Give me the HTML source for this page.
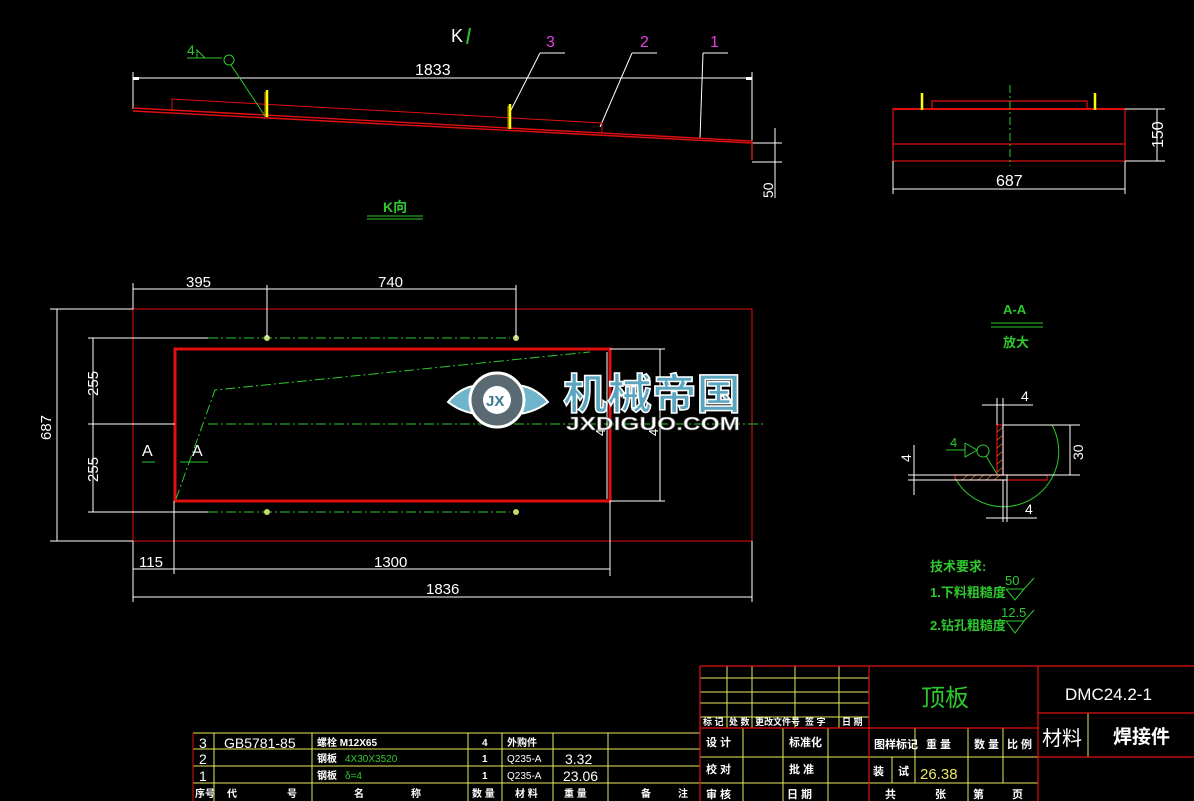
<!DOCTYPE html>
<html><head><meta charset="utf-8"><style>
html,body{margin:0;padding:0;background:#000;}
svg{display:block}
text{font-family:"Liberation Sans","Noto Sans CJK SC",sans-serif;}
</style></head><body>
<svg width="1194" height="801" viewBox="0 0 1194 801" xmlns="http://www.w3.org/2000/svg">
<rect width="1194" height="801" fill="#000"/>
<!-- TOP VIEW -->
<g stroke="#fff" stroke-width="1" fill="none">
<line x1="133" y1="78" x2="752" y2="78"/>
<line x1="133" y1="72" x2="133" y2="109"/>
<line x1="752" y1="72" x2="752" y2="141"/>
<line x1="752" y1="143" x2="782" y2="143"/>
<line x1="752" y1="162" x2="782" y2="162"/>
<line x1="775" y1="128" x2="775" y2="198"/>
<line x1="540" y1="53" x2="565" y2="53"/><line x1="540" y1="53" x2="510" y2="112"/>
<line x1="632" y1="53" x2="657" y2="53"/><line x1="632" y1="53" x2="600" y2="127"/>
<line x1="703" y1="53" x2="728" y2="53"/><line x1="703" y1="53" x2="700" y2="138"/>
</g>
<g fill="#fff"><rect x="133" y="77" width="6" height="3"/><rect x="746" y="77" width="6" height="3"/></g>
<g stroke="#e01010" fill="none" stroke-width="1.4">
<polyline points="133,108 752,141 752,160"/>
<line x1="133" y1="111" x2="752" y2="143"/>
<polyline points="172,110 172,99 602,123 602,133" stroke-width="1"/>
</g>
<g stroke="#ff0" stroke-width="2.5"><line x1="267" y1="90" x2="267" y2="117"/><line x1="510" y1="104" x2="510" y2="129"/></g>
<g stroke="#e08000" stroke-width="1"><line x1="265" y1="92" x2="265" y2="117"/><line x1="508" y1="106" x2="508" y2="129"/></g>
<g stroke="#2ec82e" fill="none" stroke-width="1">
<line x1="187" y1="58" x2="222" y2="58"/><polyline points="197,58 197,50 205,58"/>
<circle cx="229" cy="60" r="5"/><line x1="231" y1="65" x2="265" y2="116"/>
<line x1="367" y1="216" x2="423" y2="216"/><line x1="367" y1="219" x2="423" y2="219"/>
<line x1="467" y1="44" x2="470" y2="28" stroke-width="2"/>
</g>
<text x="187" y="55" fill="#2ec82e" font-size="14">4</text>
<text x="451" y="42" fill="#fff" font-size="18">K</text>
<text x="415" y="75" fill="#fff" font-size="16">1833</text>
<text x="546" y="47" fill="#e040e0" font-size="16">3</text>
<text x="640" y="47" fill="#e040e0" font-size="16">2</text>
<text x="710" y="47" fill="#e040e0" font-size="16">1</text>
<text x="0" y="0" fill="#fff" font-size="14" transform="translate(773,198) rotate(-90)">50</text>
<text x="383" y="212" fill="#2ec82e" font-size="14" font-weight="bold">K向</text>

<!-- SIDE VIEW -->
<g stroke="#e01010" fill="none" stroke-width="1.2">
<rect x="893" y="109" width="232" height="52"/>
<line x1="893" y1="144" x2="1125" y2="144"/>
<polyline points="932,109 932,101 1087,101 1087,109"/>
</g>
<line x1="893" y1="109" x2="1125" y2="109" stroke="#e01010" stroke-width="2"/>
<g stroke="#ff0" stroke-width="2.5"><line x1="922" y1="93" x2="922" y2="110"/><line x1="1095" y1="93" x2="1095" y2="110"/></g>
<line x1="1010" y1="85" x2="1010" y2="166" stroke="#2ec82e" stroke-dasharray="8,3,2,3"/>
<g stroke="#fff" fill="none">
<line x1="1125" y1="109" x2="1165" y2="109"/><line x1="1125" y1="161" x2="1165" y2="161"/>
<line x1="1157" y1="109" x2="1157" y2="161"/>
<line x1="893" y1="161" x2="893" y2="194"/><line x1="1125" y1="161" x2="1125" y2="194"/>
<line x1="893" y1="189" x2="1125" y2="189"/>
</g>
<text x="996" y="186" fill="#fff" font-size="16">687</text>
<text x="0" y="0" fill="#fff" font-size="16" transform="translate(1163,148) rotate(-90)">150</text>

<!-- PLAN VIEW -->
<rect x="133" y="309" width="619" height="232" fill="none" stroke="#e01010" stroke-width="1"/>
<rect x="175" y="349" width="435" height="152" fill="none" stroke="#e01010" stroke-width="3"/>
<g stroke="#2ec82e" fill="none" stroke-dasharray="10,3,2,3">
<line x1="208" y1="338" x2="510" y2="338"/>
<line x1="208" y1="512" x2="510" y2="512"/>
<line x1="208" y1="424" x2="765" y2="424"/>
<polyline points="176,499 215,390 590,352"/>
</g>
<g fill="#c8d870"><circle cx="267" cy="338" r="3"/><circle cx="516" cy="338" r="3"/><circle cx="267" cy="512" r="3"/><circle cx="516" cy="512" r="3"/></g>
<g stroke="#2ec82e"><line x1="142" y1="462" x2="155" y2="462"/><line x1="180" y1="462" x2="208" y2="462"/></g>
<g stroke="#fff" fill="none" stroke-width="1">
<line x1="133" y1="283" x2="133" y2="309"/><line x1="267" y1="285" x2="267" y2="338"/><line x1="516" y1="285" x2="516" y2="338"/>
<line x1="133" y1="289" x2="516" y2="289"/>
<line x1="50" y1="309" x2="133" y2="309"/><line x1="50" y1="541" x2="133" y2="541"/>
<line x1="57" y1="309" x2="57" y2="541"/>
<line x1="88" y1="338" x2="208" y2="338"/><line x1="88" y1="512" x2="208" y2="512"/>
<line x1="93" y1="338" x2="93" y2="512"/><line x1="88" y1="424" x2="175" y2="424"/>
<line x1="610" y1="349" x2="665" y2="349"/><line x1="610" y1="501" x2="665" y2="501"/>
<line x1="660" y1="349" x2="660" y2="501"/><line x1="607" y1="352" x2="607" y2="499"/>
<line x1="133" y1="541" x2="133" y2="602"/><line x1="174" y1="501" x2="174" y2="574"/>
<line x1="610" y1="501" x2="610" y2="576"/><line x1="752" y1="541" x2="752" y2="602"/>
<line x1="133" y1="569" x2="610" y2="569"/>
<line x1="133" y1="597" x2="752" y2="597"/>
</g>
<g fill="#fff" font-size="15">
<text x="186" y="287">395</text><text x="378" y="287">740</text>
<text x="139" y="567">115</text><text x="374" y="567">1300</text><text x="426" y="594">1836</text>
<text x="142" y="456" font-size="16">A</text><text x="192" y="456" font-size="16">A</text>
<text transform="translate(51,440) rotate(-90)">687</text>
<text transform="translate(98,396) rotate(-90)">255</text>
<text transform="translate(98,482) rotate(-90)">255</text>
<text transform="translate(605,436) rotate(-90)" font-size="13">4</text>
<text transform="translate(658,436) rotate(-90)" font-size="13">4</text>
</g>
<!-- watermark -->
<g>
<path d="M448,402 Q468,378 500,388 L500,414 Q468,418 448,402Z" fill="#6fb6cc" stroke="#fff" stroke-width="2"/>
<path d="M548,402 Q528,378 496,388 L496,414 Q528,418 548,402Z" fill="#6fb6cc" stroke="#fff" stroke-width="2"/>
<circle cx="497" cy="400" r="27" fill="#5a6a72" stroke="#fff" stroke-width="3"/>
<circle cx="497" cy="400" r="14" fill="#fff"/>
<text x="486" y="406" font-size="15" font-weight="bold" fill="#3a7a90">JX</text>
<text x="563" y="409" font-size="42" font-weight="bold" fill="#5aa6c0" stroke="#fff" stroke-width="1.5" textLength="178" lengthAdjust="spacingAndGlyphs">机械帝国</text>
<text x="566" y="430" font-size="18" font-weight="bold" fill="#fff" stroke="#555" stroke-width="0.6" textLength="174" lengthAdjust="spacingAndGlyphs">JXDIGUO.COM</text>
</g>

<!-- A-A section -->
<text x="1003" y="314" fill="#2ec82e" font-size="13" font-weight="bold">A-A</text>
<g stroke="#2ec82e"><line x1="991" y1="323" x2="1043" y2="323"/><line x1="991" y1="327" x2="1043" y2="327"/></g>
<text x="1003" y="347" fill="#2ec82e" font-size="13" font-weight="bold">放大</text>
<path d="M1052,425 A54,54 0 0 1 955,478" fill="none" stroke="#2ec82e"/>
<g stroke="#e01010" fill="none" stroke-width="1.2">
<rect x="997" y="425" width="6" height="50"/><rect x="955" y="475" width="92" height="5"/>
</g>
<g stroke="#d07020" stroke-width="0.8">
<path d="M997,432 l6,-5 M997,440 l6,-5 M997,448 l6,-5 M997,456 l6,-5 M997,464 l6,-5 M997,472 l6,-5"/>
<path d="M962,480 l6,-5 M970,480 l6,-5 M978,480 l6,-5 M986,480 l6,-5 M994,480 l6,-5"/>
</g>
<g stroke="#fff" fill="none">
<line x1="1003" y1="425" x2="1080" y2="425"/><line x1="908" y1="475" x2="1080" y2="475"/><line x1="908" y1="480" x2="1007" y2="480"/>
<line x1="997" y1="398" x2="997" y2="425"/><line x1="1003" y1="398" x2="1003" y2="475"/><line x1="982" y1="405" x2="1033" y2="405"/>
<line x1="914" y1="445" x2="914" y2="495"/>
<line x1="1003" y1="480" x2="1003" y2="522"/><line x1="1007" y1="475" x2="1007" y2="522"/><line x1="986" y1="518" x2="1037" y2="518"/>
<line x1="1070" y1="425" x2="1070" y2="475"/>
</g>
<g fill="#fff" font-size="14">
<text x="1021" y="401">4</text><text x="1025" y="514">4</text>
<text transform="translate(911,462) rotate(-90)">4</text>
<text transform="translate(1083,460) rotate(-90)">30</text>
</g>
<g stroke="#2ec82e" fill="none">
<line x1="946" y1="450" x2="965" y2="450"/><polyline points="965,443 965,457 977,450 965,443"/>
<circle cx="983" cy="451" r="6"/><line x1="986" y1="456" x2="997" y2="474"/>
</g>
<text x="950" y="447" fill="#2ec82e" font-size="13">4</text>
<!-- tech req -->
<g fill="#2ec82e" font-size="13" font-weight="bold">
<text x="930" y="571">技术要求:</text>
<text x="930" y="597">1.下料粗糙度</text>
<text x="930" y="630">2.钻孔粗糙度</text>
<text x="1005" y="585" font-weight="normal" font-size="13">50</text>
<text x="1001" y="617" font-weight="normal" font-size="13">12.5</text>
</g>
<g stroke="#2ec82e" fill="none">
<polyline points="1006,589 1015,600 1024,589 1006,589"/><line x1="1024" y1="589" x2="1034" y2="578"/>
<polyline points="1006,621 1015,633 1024,621 1006,621"/><line x1="1024" y1="621" x2="1034" y2="610"/>
</g>

<!-- PARTS LIST -->
<g stroke="#e8e860" fill="none" stroke-width="1">
<line x1="193" y1="733" x2="700" y2="733"/><line x1="193" y1="749" x2="700" y2="749"/>
<line x1="193" y1="766" x2="700" y2="766"/><line x1="193" y1="783" x2="700" y2="783"/>
<line x1="214" y1="733" x2="214" y2="801"/><line x1="312" y1="733" x2="312" y2="801"/>
<line x1="468" y1="733" x2="468" y2="801"/><line x1="502" y1="733" x2="502" y2="801"/>
<line x1="553" y1="733" x2="553" y2="801"/><line x1="608" y1="733" x2="608" y2="801"/>
</g>
<line x1="193" y1="733" x2="193" y2="801" stroke="#e01010"/>
<g fill="#fff" font-size="14">
<text x="199" y="748">3</text><text x="199" y="764">2</text><text x="199" y="781">1</text>
<text x="224" y="748">GB5781-85</text>
<text x="565" y="764">3.32</text><text x="563" y="781">23.06</text>
</g>
<g fill="#fff" font-size="10" font-weight="bold">
<text x="317" y="746">螺栓 M12X65</text><text x="317" y="762">钢板</text><text x="317" y="779">钢板</text>
<text x="482" y="746">4</text><text x="482" y="762">1</text><text x="482" y="779">1</text>
<text x="507" y="746">外购件</text><text x="507" y="762" font-weight="normal">Q235-A</text><text x="507" y="779" font-weight="normal">Q235-A</text>
<text x="195" y="797">序号</text><text x="227" y="797">代</text><text x="287" y="797">号</text>
<text x="354" y="797">名</text><text x="411" y="797">称</text>
<text x="472" y="797">数 量</text><text x="515" y="797">材 料</text><text x="564" y="797">重 量</text>
<text x="641" y="797">备</text><text x="678" y="797">注</text>
</g>
<text x="345" y="762" fill="#2ec82e" font-size="10">4X30X3520</text>
<text x="345" y="779" fill="#2ec82e" font-size="10">δ=4</text>

<!-- TITLE BLOCK -->
<g stroke="#e8e860" fill="none">
<line x1="700" y1="678" x2="869" y2="678"/><line x1="700" y1="692" x2="869" y2="692"/>
<line x1="700" y1="703" x2="869" y2="703"/><line x1="700" y1="717" x2="869" y2="717"/>
<line x1="727" y1="666" x2="727" y2="728"/><line x1="752" y1="666" x2="752" y2="728"/>
<line x1="795" y1="666" x2="795" y2="728"/><line x1="839" y1="666" x2="839" y2="728"/>
<line x1="700" y1="757" x2="1038" y2="757"/><line x1="700" y1="783" x2="1038" y2="783"/>
<line x1="743" y1="728" x2="743" y2="801"/><line x1="783" y1="728" x2="783" y2="801"/><line x1="828" y1="728" x2="828" y2="801"/>
<line x1="915" y1="728" x2="915" y2="783"/><line x1="968" y1="728" x2="968" y2="801"/><line x1="1003" y1="728" x2="1003" y2="783"/>
<line x1="892" y1="757" x2="892" y2="783"/><line x1="1088" y1="713" x2="1088" y2="757"/>
</g>
<g stroke="#e01010" fill="none" stroke-width="1.2">
<line x1="700" y1="666" x2="1194" y2="666"/><line x1="700" y1="666" x2="700" y2="801"/>
<line x1="869" y1="666" x2="869" y2="801"/><line x1="1038" y1="666" x2="1038" y2="801"/>
<line x1="700" y1="728" x2="1038" y2="728"/><line x1="1038" y1="713" x2="1194" y2="713"/><line x1="1038" y1="757" x2="1194" y2="757"/>
</g>
<text x="921" y="706" fill="#2ec82e" font-size="24">顶板</text>
<text x="1065" y="700" fill="#fff" font-size="17">DMC24.2-1</text>
<text x="1042" y="745" fill="#fff" font-size="20">材料</text>
<text x="1113" y="743" fill="#fff" font-size="19" font-weight="bold">焊接件</text>
<text x="920" y="779" fill="#e8e860" font-size="15">26.38</text>
<g fill="#fff" font-size="9" font-weight="bold">
<text x="703" y="725">标 记</text><text x="729" y="725">处 数</text><text x="755" y="725">更改文件号</text><text x="805" y="725">签 字</text><text x="842" y="725">日 期</text>
</g>
<g fill="#fff" font-size="11" font-weight="bold">
<text x="706" y="746">设 计</text><text x="789" y="746">标准化</text>
<text x="706" y="773">校 对</text><text x="789" y="773">批 准</text>
<text x="706" y="798">审 核</text><text x="787" y="798">日 期</text>
<text x="874" y="748">图样标记</text><text x="926" y="748">重  量</text><text x="974" y="748">数 量</text><text x="1007" y="748">比 例</text>
<text x="873" y="775">装</text><text x="898" y="775">试</text>
<text x="885" y="798">共</text><text x="935" y="798">张</text><text x="973" y="798">第</text><text x="1012" y="798">页</text>
</g>
</svg>
</body></html>
